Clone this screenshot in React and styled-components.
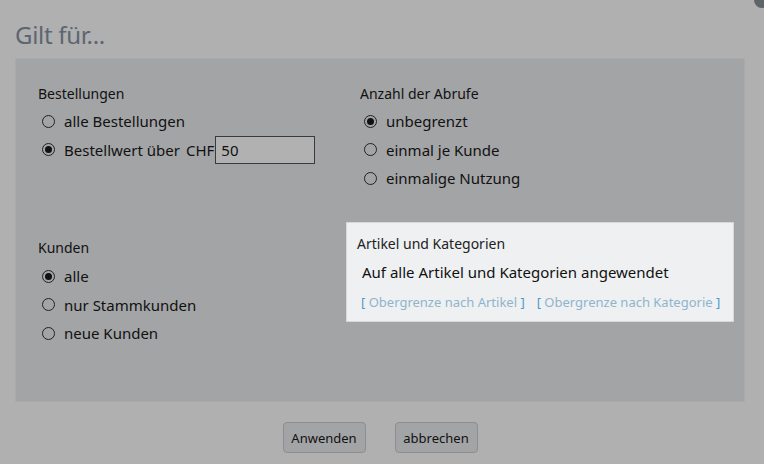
import React, { useState } from 'react';
import styled, { createGlobalStyle } from 'styled-components';

const Global = createGlobalStyle`
  html, body {
    margin: 0;
    padding: 0;
    background: #b0b0b0;
    font-family: "Noto Sans", "Open Sans", sans-serif;
    color: #111;
  }
`

const Page = styled.div`
  width: 764px;
  height: 464px;
  position: relative;
  overflow: hidden;
  background: #b0b0b0;
`

const Close = styled.div`
  position: absolute;
  top: -8px;
  right: -6px;
  width: 16px;
  height: 16px;
  border-radius: 50%;
  background: #5f6468;
`

const Title = styled.h2`
  margin: 0;
  padding: 20px 0 0 15px;
  height: 38px;
  font-size: 24px;
  font-weight: 400;
  color: #5d6670;
  line-height: 30px;
  letter-spacing: -0.3px;
`

const Panel = styled.div`
  margin: 0 19px 0 15px;
  height: 344px;
  box-sizing: border-box;
  background: #a3a4a6;
  border: 1px solid #a9aaac;
  padding: 25px 10px 0 22px;
  display: grid;
  grid-template-columns: 308px 388px;
  grid-template-rows: 138px auto;
`

const Section = styled.div`
  padding-left: ${(p) => p.$indent || 0}px;
  padding-top: ${(p) => p.$top || 0}px;
`

const Label = styled.div`
  font-size: 14px;
  line-height: 20px;
  margin-bottom: ${(p) => p.$gap ?? 3}px;
  color: #111;
`

const Row = styled.label`
  display: flex;
  align-items: center;
  height: 28.5px;
  padding-left: 4px;
  font-size: 15px;
  color: #111;
`

const Radio = styled.span`
  width: 11px;
  height: 11px;
  border: 1px solid #222;
  border-radius: 50%;
  margin-right: 9px;
  display: flex;
  align-items: center;
  justify-content: center;
  flex-shrink: 0;
  &::after {
    content: "";
    width: 7px;
    height: 7px;
    border-radius: 50%;
    background: ${(p) => (p.$on ? '#111' : 'transparent')};
  }
`

const Currency = styled.span`
  margin-left: 6px;
  margin-right: 1px;
`

const Input = styled.input`
  width: 100px;
  height: 28px;
  box-sizing: border-box;
  border: 1px solid #3a3a3a;
  background: #b1b1b1;
  font-family: inherit;
  font-size: 15px;
  padding: 0 5px;
  color: #111;
  outline: none;
`

const Box = styled.div`
  height: 100px;
  box-sizing: border-box;
  background: #eef0f2;
  border: 1px solid #d6d8da;
  padding: 11px 10px 0 10px;
`

const BoxTitle = styled.div`
  font-size: 14px;
  line-height: 20px;
  color: #222;
`

const BoxText = styled.div`
  font-size: 15px;
  line-height: 20px;
  margin-top: 8px;
  padding-left: 5px;
  color: #111;
`

const Links = styled.div`
  display: flex;
  gap: 12px;
  margin-top: 10px;
  padding-left: 4px;
  font-size: 13px;
  line-height: 20px;
`

const Link = styled.a`
  color: #8fb5cb;
  text-decoration: none;
  cursor: pointer;
  span {
    color: #4f9ac5;
  }
`

const Footer = styled.div`
  display: flex;
  justify-content: center;
  gap: 29px;
  padding-top: 20px;
  margin-right: 4px;
`

const Button = styled.button`
  width: 83px;
  height: 31px;
  border: 1px solid #8d8e90;
  border-radius: 4px;
  background: #a3a4a6;
  font-family: inherit;
  font-size: 13px;
  color: #111;
`

const RadioRow = ({ on, children, onClick }) => (
  <Row onClick={onClick}>
    <Radio $on={on} />
    {children}
  </Row>
)

export default function App() {
  const [orders, setOrders] = useState(1);
  const [uses, setUses] = useState(0);
  const [customers, setCustomers] = useState(0);

  return (
    <Page>
      <Global />
      <Close />
      <Title>Gilt für...</Title>
      <Panel>
        <Section>
          <Label>Bestellungen</Label>
          <RadioRow on={orders === 0} onClick={() => setOrders(0)}>alle Bestellungen</RadioRow>
          <RadioRow on={orders === 1} onClick={() => setOrders(1)}>
            Bestellwert über<Currency>CHF</Currency>
            <Input defaultValue="50" />
          </RadioRow>
        </Section>
        <Section $indent={14}>
          <Label>Anzahl der Abrufe</Label>
          {['unbegrenzt', 'einmal je Kunde', 'einmalige Nutzung'].map((t, i) => (
            <RadioRow key={t} on={uses === i} onClick={() => setUses(i)}>{t}</RadioRow>
          ))}
        </Section>
        <Section $top={16}>
          <Label $gap={4}>Kunden</Label>
          {['alle', 'nur Stammkunden', 'neue Kunden'].map((t, i) => (
            <RadioRow key={t} on={customers === i} onClick={() => setCustomers(i)}>{t}</RadioRow>
          ))}
        </Section>
        <Section>
          <Box>
            <BoxTitle>Artikel und Kategorien</BoxTitle>
            <BoxText>Auf alle Artikel und Kategorien angewendet</BoxText>
            <Links>
              <Link><span>[</span> Obergrenze nach Artikel <span>]</span></Link>
              <Link><span>[</span> Obergrenze nach Kategorie <span>]</span></Link>
            </Links>
          </Box>
        </Section>
      </Panel>
      <Footer>
        <Button>Anwenden</Button>
        <Button>abbrechen</Button>
      </Footer>
    </Page>
  )
}
